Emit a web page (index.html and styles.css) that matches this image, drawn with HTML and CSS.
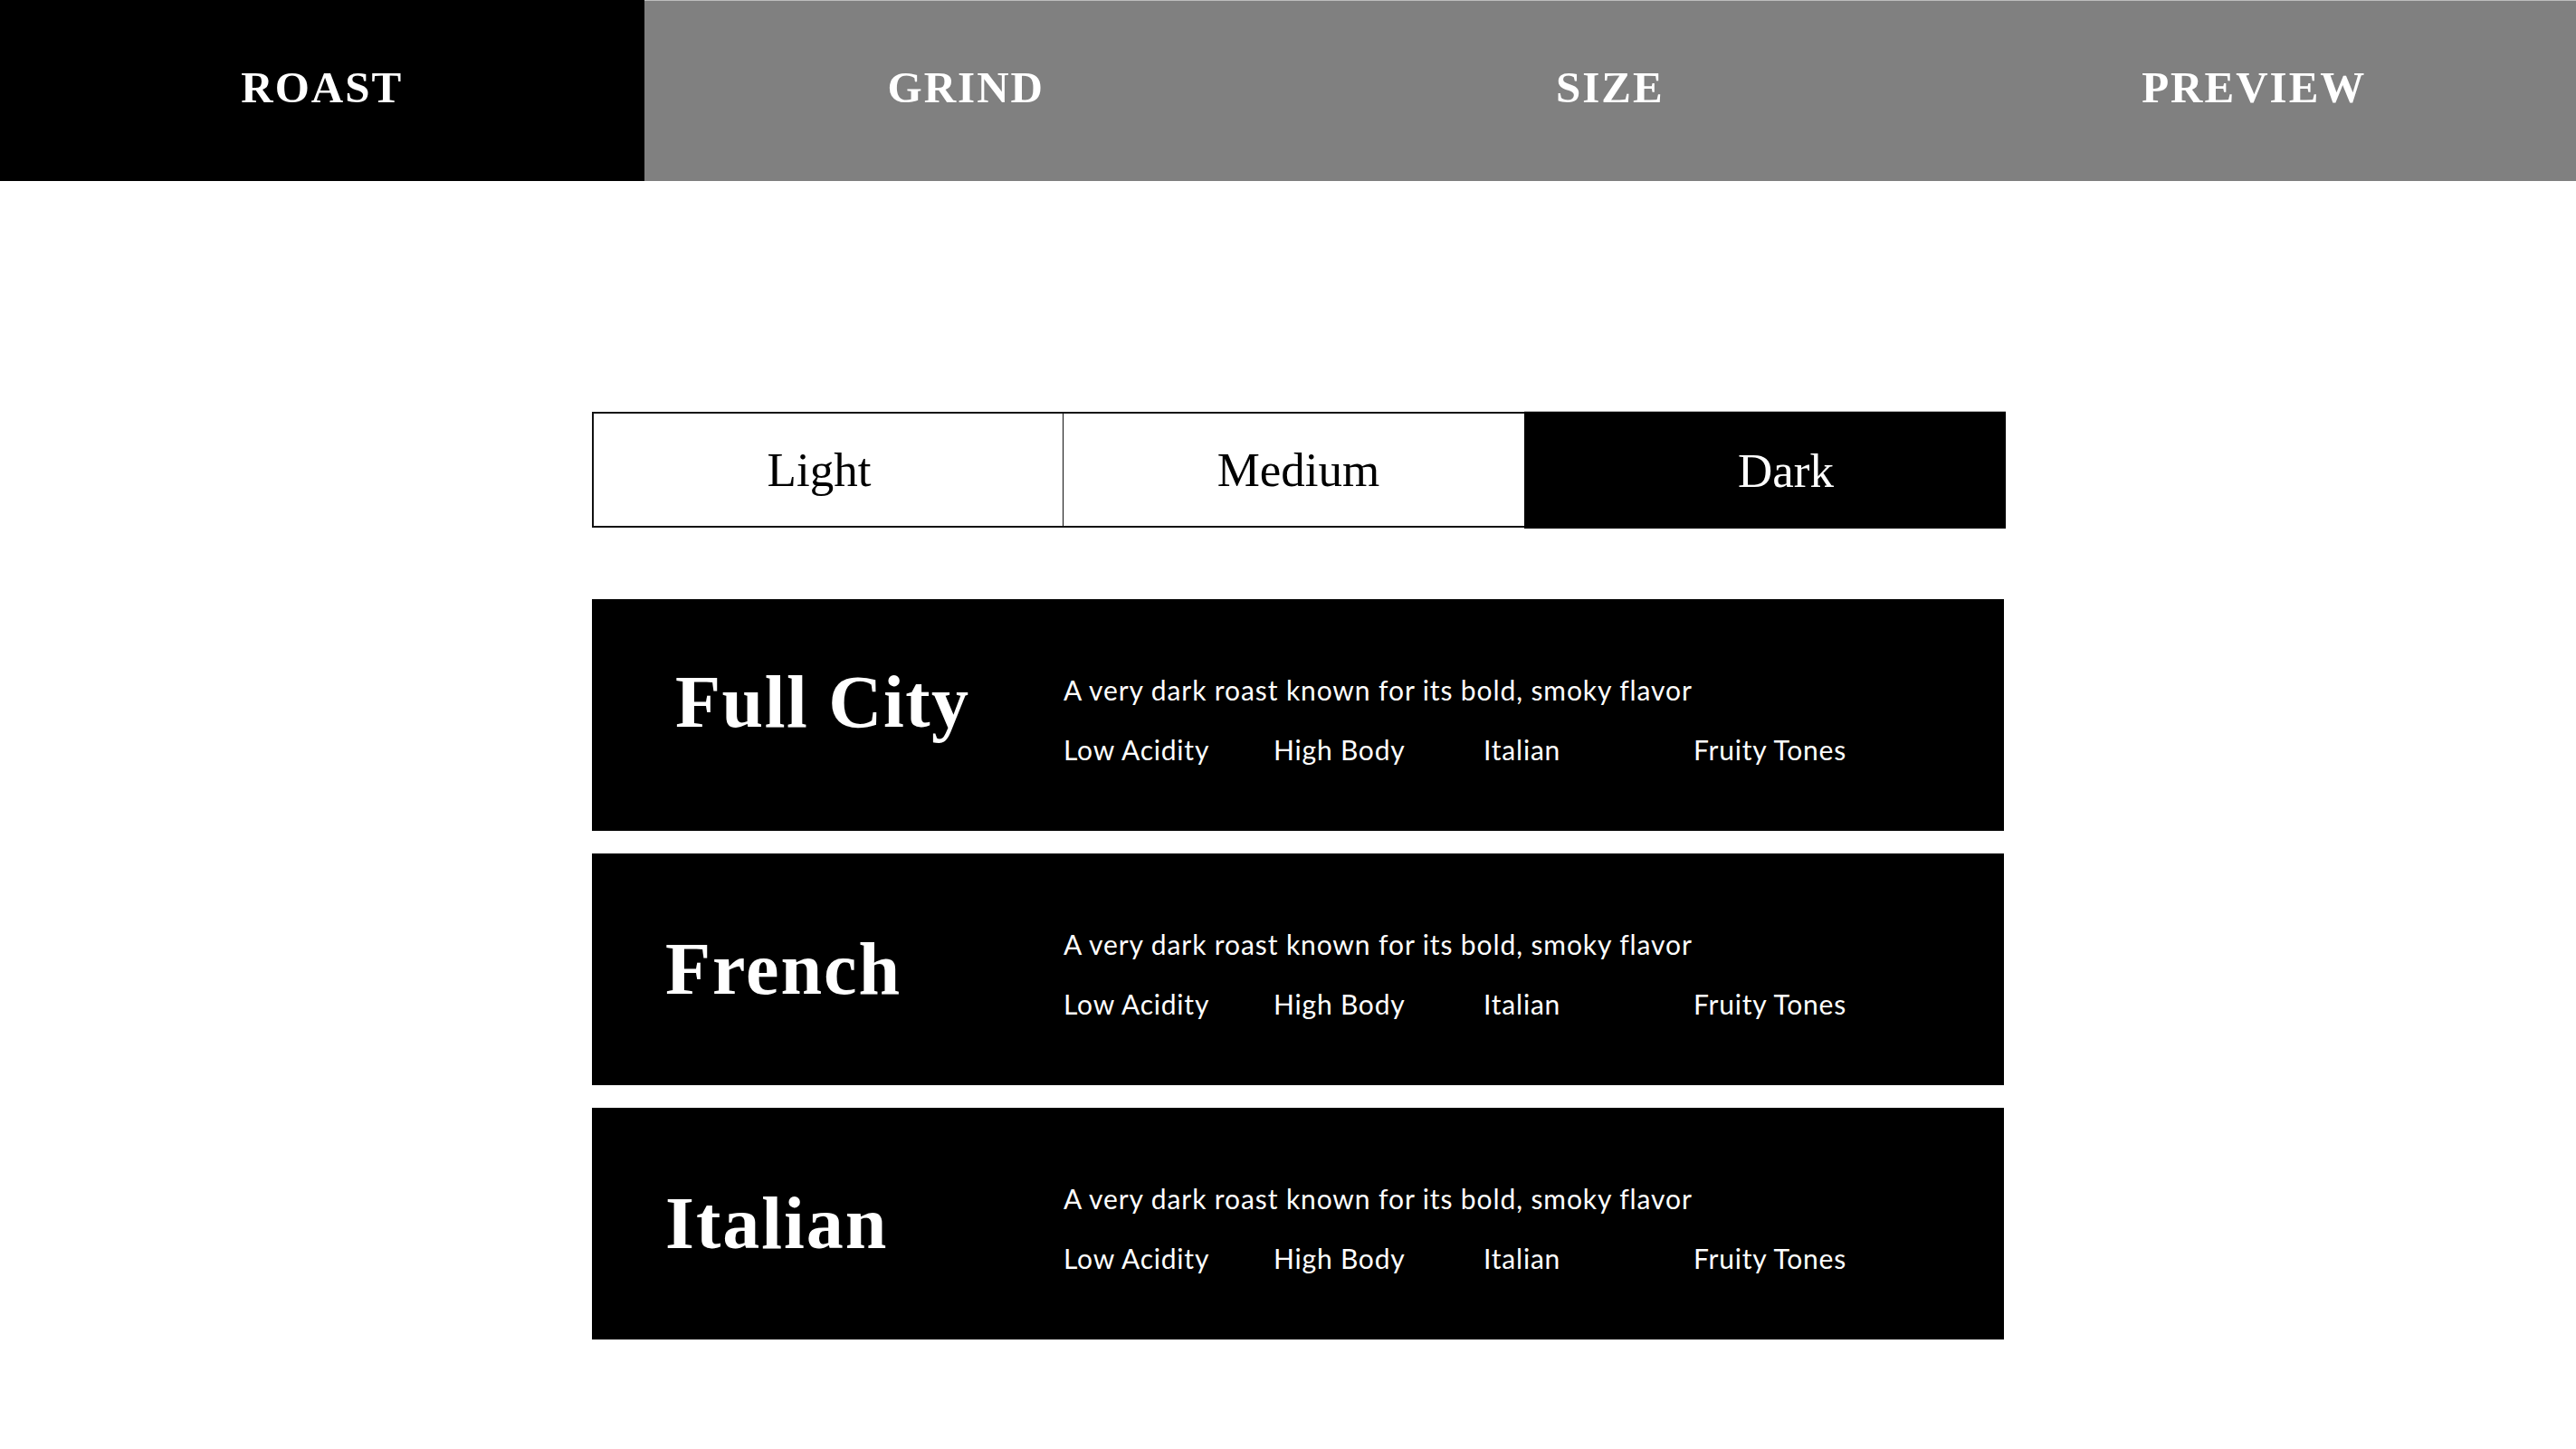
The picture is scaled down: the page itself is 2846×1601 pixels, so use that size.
FILE: index.html
```html
<!DOCTYPE html>
<html lang="en">
<head>
<meta charset="utf-8">
<title>Roast</title>
<link rel="stylesheet" href="styles.css">
</head>
<body>
  <nav class="steps">
    <div class="step step--active">ROAST</div>
    <div class="step">GRIND</div>
    <div class="step">SIZE</div>
    <div class="step">PREVIEW</div>
  </nav>

  <main class="content">
    <div class="segmented">
      <div class="seg seg--light">Light</div>
      <div class="seg seg--medium">Medium</div>
      <div class="seg seg--dark">Dark</div>
    </div>

    <div class="cards">
      <div class="card">
        <div class="card__title card__title--first">Full City</div>
        <div class="card__info">
          <div class="card__desc">A very dark roast known for its bold, smoky flavor</div>
          <div class="card__tags">
            <span>Low Acidity</span><span>High Body</span><span>Italian</span><span>Fruity Tones</span>
          </div>
        </div>
      </div>
      <div class="card">
        <div class="card__title">French</div>
        <div class="card__info">
          <div class="card__desc">A very dark roast known for its bold, smoky flavor</div>
          <div class="card__tags">
            <span>Low Acidity</span><span>High Body</span><span>Italian</span><span>Fruity Tones</span>
          </div>
        </div>
      </div>
      <div class="card">
        <div class="card__title">Italian</div>
        <div class="card__info">
          <div class="card__desc">A very dark roast known for its bold, smoky flavor</div>
          <div class="card__tags">
            <span>Low Acidity</span><span>High Body</span><span>Italian</span><span>Fruity Tones</span>
          </div>
        </div>
      </div>
    </div>
  </main>
</body>
</html>
```

FILE: styles.css
```css
html, body {
  margin: 0;
  padding: 0;
  background: #ffffff;
}

body {
  font-family: "Liberation Serif", "DejaVu Serif", serif;
  color: #000;
}

.steps {
  display: grid;
  grid-template-columns: repeat(4, 1fr);
  height: 200px;
}

.step {
  display: flex;
  align-items: center;
  justify-content: center;
  background: #808080;
  border-top: 1px solid #bdbdbd;
  color: #fff;
  font-weight: bold;
  font-size: 49px;
  letter-spacing: 2px;
  padding-bottom: 8px;
  box-sizing: border-box;
}

.step--active {
  background: #000;
  border-top-color: #000;
}

.content {
  margin-left: 654px;
  width: 1562px;
  padding-top: 254px;
}

.segmented {
  display: grid;
  grid-template-columns: 521px 509px 1fr;
  height: 130px;
  align-items: stretch;
}

.seg {
  display: flex;
  align-items: center;
  justify-content: center;
  font-size: 53px;
  box-sizing: border-box;
}

.seg--light {
  margin: 1px 0;
  border: 2px solid #111;
  border-right: 1px solid #111;
  padding-right: 20px;
}

.seg--medium {
  margin: 1px 0;
  border-top: 2px solid #111;
  border-bottom: 2px solid #111;
  padding-left: 10px;
}

.seg--dark {
  background: #000;
  color: #fff;
  border-top: 1px solid #bdbdbd;
  padding-left: 46px;
}

.cards {
  display: flex;
  flex-direction: column;
  gap: 25px;
  margin-top: 78px;
  width: 1560px;
}

.card {
  display: grid;
  grid-template-columns: 521px 1fr;
  align-items: center;
  height: 256px;
  background: #000;
  color: #fff;
}

.card__title {
  padding-left: 81px;
  font-weight: bold;
  font-size: 82px;
  letter-spacing: 2px;
}

.card__title--first {
  padding-left: 92px;
  margin-bottom: 28px;
  letter-spacing: 1.5px;
}

.card__info {
  font-family: "Lato", "Noto Sans", sans-serif;
  font-size: 30px;
  padding-top: 10px;
}

.card__desc {
  letter-spacing: 0.9px;
}

.card__tags {
  display: grid;
  grid-template-columns: repeat(4, 232px);
  margin-top: 30px;
  letter-spacing: 0.8px;
}
```
